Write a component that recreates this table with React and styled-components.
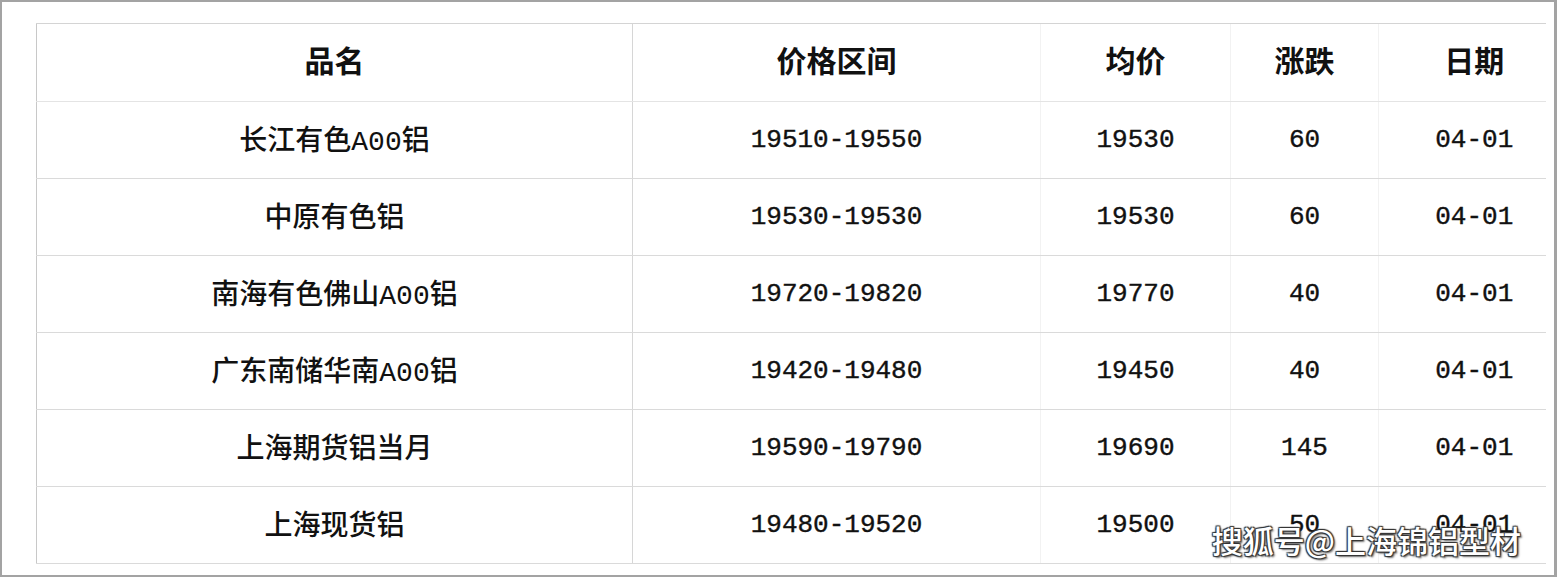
import React from 'react';
import styled, { createGlobalStyle } from 'styled-components';

const rows = [
  { name: '长江有色A00铝', range: '19510-19550', avg: '19530', change: '60', date: '04-01' },
  { name: '中原有色铝', range: '19530-19530', avg: '19530', change: '60', date: '04-01' },
  { name: '南海有色佛山A00铝', range: '19720-19820', avg: '19770', change: '40', date: '04-01' },
  { name: '广东南储华南A00铝', range: '19420-19480', avg: '19450', change: '40', date: '04-01' },
  { name: '上海期货铝当月', range: '19590-19790', avg: '19690', change: '145', date: '04-01' },
  { name: '上海现货铝', range: '19480-19520', avg: '19500', change: '50', date: '04-01' },
];

const columns = [
  { key: 'name', title: '品名', width: 596 },
  { key: 'range', title: '价格区间', width: 408 },
  { key: 'avg', title: '均价', width: 190 },
  { key: 'change', title: '涨跌', width: 148 },
  { key: 'date', title: '日期', width: 167, shift: 24 },
];

const GlobalStyle = createGlobalStyle`
  html, body {
    margin: 0;
    padding: 0;
    background: #fff;
  }
  body {
    font-family: "Liberation Mono", "Noto Sans CJK SC", monospace;
    color: #111;
  }
`;

const Frame = styled.div`
  position: relative;
  width: 1557px;
  height: 577px;
  box-sizing: border-box;
  border: 2px solid #a3a3a3;
  border-right-width: 3px;
  padding: 21px 0 0 34px;
  background: #fff;
  overflow: hidden;
`;

const Table = styled.table`
  border-collapse: collapse;
  table-layout: fixed;
  width: 1507px;
`;

const lineColor = p => (p.first ? '#c8c8c8' : p.strong ? '#d6d6d6' : '#f2f2f2');

const HeadCell = styled.th`
  height: 69px;
  padding: 0 0 8px ${p => p.shift || 0}px;
  font-family: "Noto Sans CJK SC", sans-serif;
  font-size: 30px;
  font-weight: 700;
  line-height: 1;
  text-align: center;
  border-top: 1px solid #d4d4d4;
  border-bottom: 1px solid #e4e4e4;
  border-left: 1px solid ${lineColor};
`;

const Cell = styled.td`
  height: ${p => (p.name ? 71 : 76)}px;
  padding: ${p => (p.name ? 5 : 0)}px 0 0 ${p => p.shift || 0}px;
  text-align: center;
  line-height: 1;
  font-size: ${p => (p.name ? 28 : 26)}px;
  font-family: ${p => (p.name ? '"Liberation Mono", "Noto Sans CJK SC", monospace' : '"Liberation Mono", monospace')};
  font-weight: ${p => (p.name ? 500 : 400)};
  -webkit-text-stroke: ${p => (p.name ? 0 : 0.4)}px #111;
  border-bottom: 1px solid #dadada;
  border-left: 1px solid ${lineColor};
`;

const Watermark = styled.div`
  position: absolute;
  right: 33px;
  bottom: 13px;
  font-family: "Noto Sans CJK SC", sans-serif;
  font-size: 31px;
  font-weight: 500;
  color: #fff;
  text-shadow: 1px 1px 1px #333, -1px -1px 1px #333, 1px -1px 1px #333, -1px 1px 1px #333, 2px 2px 2px rgba(0,0,0,0.5);
`;

export default function App() {
  return (
    <>
      <GlobalStyle />
      <Frame>
        <Table>
          <colgroup>
            {columns.map(c => (
              <col key={c.key} style={{ width: c.width }} />
            ))}
          </colgroup>
          <thead>
            <tr>
              {columns.map((c, i) => (
                <HeadCell key={c.key} first={i === 0} strong={i === 1} shift={c.shift}>
                  {c.title}
                </HeadCell>
              ))}
            </tr>
          </thead>
          <tbody>
            {rows.map(r => (
              <tr key={r.name}>
                {columns.map((c, i) => (
                  <Cell key={c.key} first={i === 0} strong={i === 1} name={i === 0} shift={c.shift}>
                    {r[c.key]}
                  </Cell>
                ))}
              </tr>
            ))}
          </tbody>
        </Table>
        <Watermark>搜狐号@上海锦铝型材</Watermark>
      </Frame>
    </>
  );
}
